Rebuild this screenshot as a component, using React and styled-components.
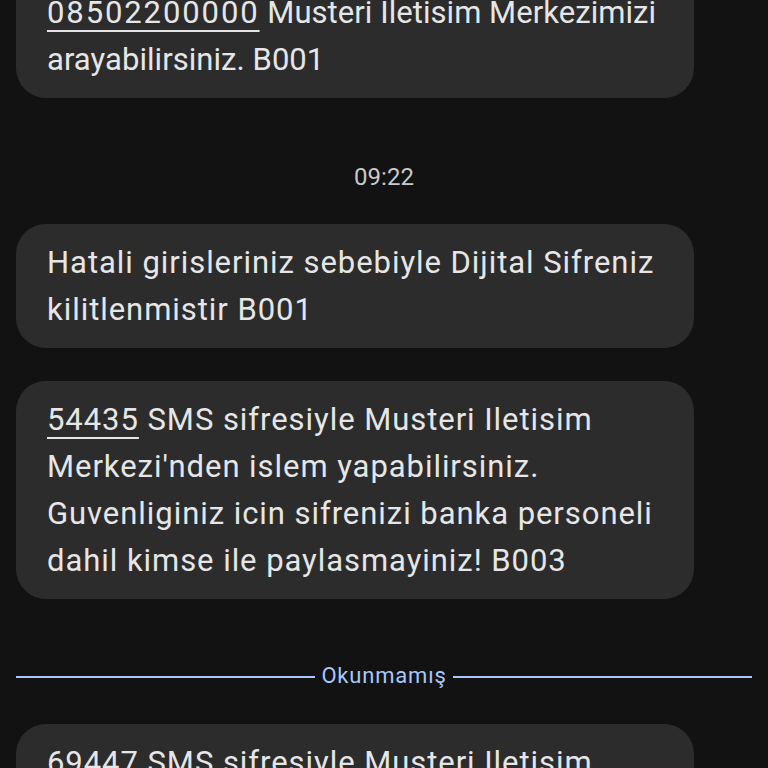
import React from "react";
import styled, { createGlobalStyle } from "styled-components";

const GlobalStyle = createGlobalStyle`
  html, body {
    margin: 0;
    padding: 0;
    background: #121212;
    overflow: hidden;
  }
  body {
    font-family: Roboto, "Noto Sans", sans-serif;
  }
`;

const Screen = styled.div`
  width: 768px;
  height: 768px;
  overflow: hidden;
  background: #121212;
`;

const Thread = styled.div`
  display: flex;
  flex-direction: column;
  margin-top: -11px;
`;

const Bubble = styled.div`
  box-sizing: border-box;
  width: 678px;
  margin-left: 16px;
  margin-top: ${(p) => p.gap || 0}px;
  padding: ${(p) => (p.cut ? "0 31px 15px" : "15px 31px")};
  background: #2c2c2c;
  border-radius: ${(p) => (p.cut ? "0 0 30px 30px" : "30px")};
  color: #e6e6e6;
  font-size: 31px;
  line-height: 47px;
  letter-spacing: ${(p) => (p.tight ? "0.05px" : "0.95px")};
  white-space: nowrap;
`;

const Code = styled.span`
  text-decoration: underline;
  text-decoration-thickness: 2px;
  text-underline-offset: 7px;
  letter-spacing: ${(p) => (p.wide ? "1.9px" : "inherit")};
`;

const Stamp = styled.div`
  text-align: center;
  color: #c9c9c9;
  font-size: 24px;
  line-height: 26px;
  margin-top: 66px;
  margin-bottom: 34px;
`;

const Divider = styled.div`
  display: flex;
  align-items: center;
  margin: 66px 16px 0;
  color: #a8c7fa;
  font-size: 22px;
  line-height: 26px;
  letter-spacing: 0.8px;
  &::before,
  &::after {
    content: "";
    flex: 1;
    height: 2px;
    background: #a8c7fa;
  }
`;

const DividerLabel = styled.span`
  padding: 0 6px;
  margin-top: -2px;
`;

export default function App() {
  return (
    <Screen>
      <GlobalStyle />
      <Thread>
        <Bubble cut tight>
          <Code wide>08502200000</Code> Musteri Iletisim Merkezimizi
          <br />
          arayabilirsiniz. B001
        </Bubble>
        <Stamp>09:22</Stamp>
        <Bubble>
          Hatali girisleriniz sebebiyle Dijital Sifreniz
          <br />
          kilitlenmistir B001
        </Bubble>
        <Bubble gap={33}>
          <Code>54435</Code> SMS sifresiyle Musteri Iletisim
          <br />
          Merkezi'nden islem yapabilirsiniz.
          <br />
          Guvenliginiz icin sifrenizi banka personeli
          <br />
          dahil kimse ile paylasmayiniz! B003
        </Bubble>
        <Divider>
          <DividerLabel>Okunmamış</DividerLabel>
        </Divider>
        <Bubble gap={35}>
          <Code>69447</Code> SMS sifresiyle Musteri Iletisim
          <br />
          Merkezi'nden islem yapabilirsiniz.
        </Bubble>
      </Thread>
    </Screen>
  );
}
